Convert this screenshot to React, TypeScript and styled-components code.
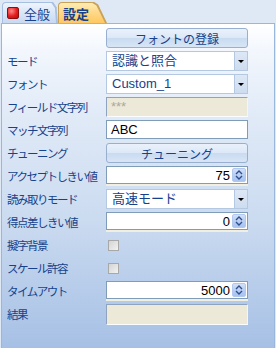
import styled, { createGlobalStyle } from "styled-components";

const GlobalStyle = createGlobalStyle`
  html, body {
    margin: 0;
    padding: 0;
  }
  body {
    width: 276px;
    height: 348px;
    overflow: hidden;
    background: #dfe9f5;
    font-family: "Liberation Sans", "Noto Sans CJK JP", sans-serif;
  }
`;

const Window = styled.div`
    width: 276px;
    height: 348px;
    display: flex;
    flex-direction: column;
    background: #dfe9f5;
`;

const TabStrip = styled.div`
    height: 21px;
    padding: 2px 0 0 2px;
    display: flex;
    align-items: flex-end;
`;

// office 2007 style tabs, the slanted right edge is drawn by the pseudo elements
const Tab = styled.div<{ $active?: boolean }>`
    position: relative;
    height: 21px;
    box-sizing: border-box;
    display: flex;
    align-items: center;
    gap: 5px;
    font-family: "Noto Sans CJK JP", sans-serif;
    font-size: 13px;
    color: #15428b;
    font-weight: ${ (p) => p.$active ? 700 : 400 };
    border: 1px solid ${ (p) => p.$active ? "#c9a25a" : "#a7c0e2" };
    border-bottom: none;
    border-right: none;
    border-radius: 4px 0 0 0;
    padding-left: 4px;
    width: ${ (p) => p.$active ? "33px" : "49px" };
    margin-right: ${ (p) => p.$active ? "0" : "7px" };
    z-index: ${ (p) => p.$active ? 2 : 1 };
    background: ${ (p) => p.$active
        ? "linear-gradient(#ffedb5, #ffd98a 45%, #ffc862)"
        : "linear-gradient(#eef4fc, #d9e6f7 50%, #c7d9f1)" };

    &::before, &::after {
        content: "";
        position: absolute;
        top: -1px;
        bottom: 0;
    }
    &::before {
        right: ${ (p) => p.$active ? "-16px" : "-7px" };
        width: ${ (p) => p.$active ? "16px" : "7px" };
        background: ${ (p) => p.$active ? "#c9a25a" : "#a7c0e2" };
        clip-path: ${ (p) => p.$active
            ? "polygon(0 0, 20% 0, 45% 12%, 100% 100%, 0 100%)"
            : "polygon(0 0, 30% 0, 80% 25%, 100% 100%, 0 100%)" };
    }
    &::after {
        top: 0;
        right: ${ (p) => p.$active ? "-15px" : "-6px" };
        width: ${ (p) => p.$active ? "16px" : "7px" };
        background: ${ (p) => p.$active
            ? "linear-gradient(#ffedb5, #ffd98a 45%, #ffc862)"
            : "linear-gradient(#eef4fc, #d9e6f7 50%, #c7d9f1)" };
        clip-path: ${ (p) => p.$active
            ? "polygon(0 0, 14% 0, 40% 12%, 94% 100%, 0 100%)"
            : "polygon(0 0, 20% 0, 70% 25%, 86% 100%, 0 100%)" };
    }
`;

const TabIcon = styled.span`
    width: 10px;
    height: 10px;
    border: 1px solid #8a1010;
    border-radius: 2px;
    background: radial-gradient(circle at 35% 30%, #ff8a8a, #e51e1e 55%, #b60c0c);
    flex: none;
`;

const Panel = styled.div`
    flex: 1;
    margin: 0 1px;
    border: 1px solid #99b6dd;
    border-bottom: none;
    background: linear-gradient(#ffffff 0%, #f3f7fd 8%, #e3ecf8 25%, #cbdbf0 60%, #a6c0e5 100%);
    padding: 4px 0 0 5px;
`;

const Form = styled.div`
    display: grid;
    grid-template-columns: 99px 142px;
    grid-auto-rows: 20px;
    row-gap: 3px;
`;

const Label = styled.div`
    font-family: "Noto Sans CJK JP", sans-serif;
    font-size: 11.5px;
    letter-spacing: -1.5px;
    line-height: 20px;
    color: #15428b;
    white-space: nowrap;
    grid-column: 1;
`;

const Button = styled.div`
    grid-column: 2;
    box-sizing: border-box;
    height: 20px;
    border: 1px solid #98afcf;
    border-radius: 3px;
    background: linear-gradient(#eaf1fb, #dce8f7 50%, #c9dbf1 51%, #d8e5f5);
    display: flex;
    align-items: center;
    justify-content: center;
    font-family: "Noto Sans CJK JP", sans-serif;
    font-size: 12px;
    color: #15428b;
`;

const Select = styled.div`
    grid-column: 2;
    box-sizing: border-box;
    height: 20px;
    border: 1px solid #b4c8e2;
    background: #fff;
    display: flex;
    align-items: stretch;
`;

const SelectText = styled.div`
    flex: 1;
    padding-left: 5px;
    font-size: 13px;
    line-height: 18px;
    color: #15428b;
`;

const SelectArrow = styled.div`
    width: 12px;
    background: linear-gradient(#dde8f6, #cddcf0);
    border-left: 1px solid #b4c8e2;
    display: flex;
    align-items: center;
    justify-content: center;
    &::after {
        content: "";
        border-left: 3px solid transparent;
        border-right: 3px solid transparent;
        border-top: 3px solid #000;
    }
`;

const TextBox = styled.div<{ $disabled?: boolean; $tall?: boolean }>`
    grid-column: 2;
    box-sizing: border-box;
    height: ${ (p) => p.$tall ? "21px" : p.$disabled ? "20px" : "19px" };
    border: 1px solid #7f9db9;
    border-color: ${ (p) => p.$disabled ? "#8ea3bf #f2f5fa #fbfcfe #8ea3bf" : "#7f9db9" };
    background: ${ (p) => p.$disabled ? "#ece9d8" : "#fff" };
    padding-left: 4px;
    font-size: 13px;
    line-height: 17px;
    color: ${ (p) => p.$disabled ? "#aca899" : "#000" };
`;

const Numeric = styled.div`
    grid-column: 2;
    display: flex;
    flex-direction: column;
`;

const NumericBox = styled.div`
    box-sizing: border-box;
    height: 18px;
    border: 1px solid #7f9db9;
    background: #fff;
    display: flex;
    align-items: center;
    justify-content: flex-end;
    padding: 0 1px 0 4px;
    gap: 2px;
    font-size: 13px;
    color: #000;
`;

const NumericShadow = styled.div`
    height: 2px;
    background: #f1eee2;
`;

const Spin = styled.div`
    width: 14px;
    height: 14px;
    border: 1px solid #b3c8ee;
    border-radius: 2px;
    box-sizing: border-box;
    background: linear-gradient(#d2e0f8, #b8cef4 50%, #a9c3f0);
    display: flex;
    align-items: center;
    justify-content: center;
`;

const CheckBox = styled.div`
    grid-column: 2;
    align-self: center;
    margin-left: 2px;
    width: 11px;
    height: 11px;
    box-sizing: border-box;
    border: 1px solid #a8a8a8;
    background: linear-gradient(135deg, #d4d4d4, #f2f2f2);
`;

const SpinArrows = () => (
    <svg width="8" height="10" viewBox="0 0 8 10">
        <path d="M1 4 L4 1 L7 4" fill="none" stroke="#2f4f8a" strokeWidth="1.4" />
        <path d="M1 6 L4 9 L7 6" fill="none" stroke="#2f4f8a" strokeWidth="1.4" />
    </svg>
);

const NumberField = ({ value }: { value: string }) => (
    <Numeric>
        <NumericBox>
            <span>{value}</span>
            <Spin><SpinArrows /></Spin>
        </NumericBox>
        <NumericShadow />
    </Numeric>
);

const Dropdown = ({ value }: { value: string }) => (
    <Select>
        <SelectText>{value}</SelectText>
        <SelectArrow />
    </Select>
);

export default function App() {
    return (
        <>
            <GlobalStyle />
            <Window>
                <TabStrip>
                    <Tab><TabIcon />全般</Tab>
                    <Tab $active>設定</Tab>
                </TabStrip>
                <Panel>
                    <Form>
                        <Button>フォントの登録</Button>
                        <Label>モード</Label>
                        <Dropdown value="認識と照合" />
                        <Label>フォント</Label>
                        <Dropdown value="Custom_1" />
                        <Label>フィールド文字列</Label>
                        <TextBox $disabled>***</TextBox>
                        <Label>マッチ文字列</Label>
                        <TextBox>ABC</TextBox>
                        <Label>チューニング</Label>
                        <Button>チューニング</Button>
                        <Label>アクセプトしきい値</Label>
                        <NumberField value="75" />
                        <Label>読み取りモード</Label>
                        <Dropdown value="高速モード" />
                        <Label>得点差しきい値</Label>
                        <NumberField value="0" />
                        <Label>擬字背景</Label>
                        <CheckBox />
                        <Label>スケール許容</Label>
                        <CheckBox />
                        <Label>タイムアウト</Label>
                        <NumberField value="5000" />
                        <Label>結果</Label>
                        <TextBox $disabled $tall />
                    </Form>
                </Panel>
            </Window>
        </>
    );
}
